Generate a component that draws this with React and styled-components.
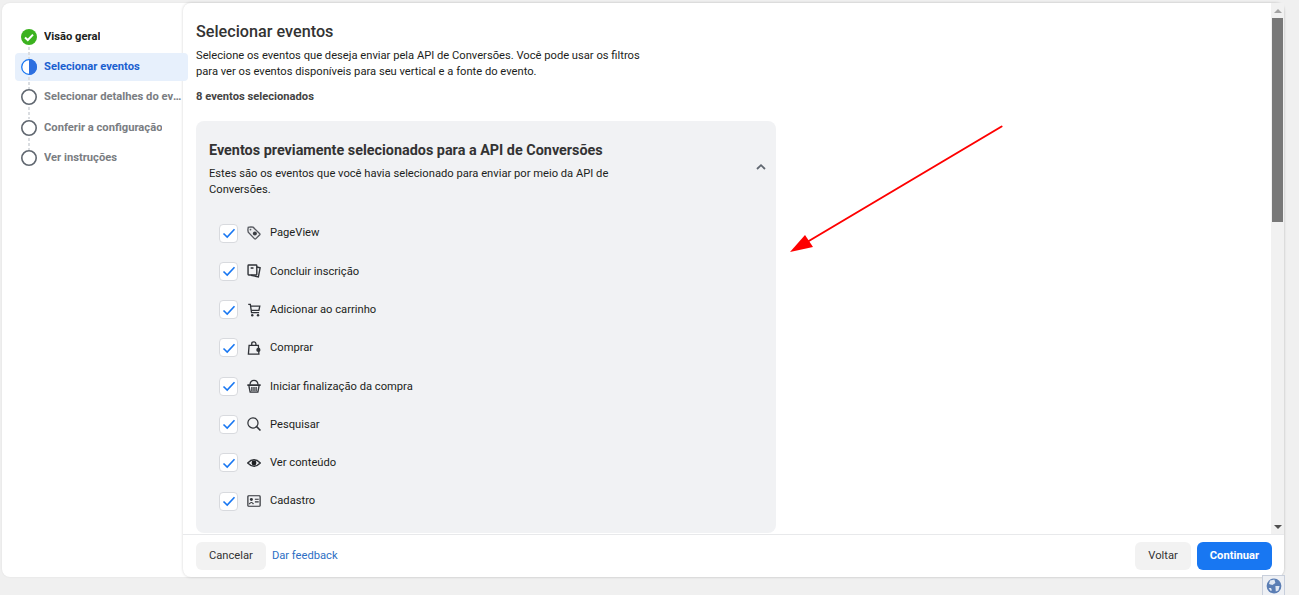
import React from 'react'
import styled, { createGlobalStyle } from 'styled-components'

const Global = createGlobalStyle`
  html, body { margin: 0; padding: 0; height: 100%; background: #f0f0f0; overflow: hidden; }
  body { font-family: Roboto, "Liberation Sans", sans-serif; color: #1c1e21; }
`

const steps = [
  { label: 'Visão geral', state: 'done' },
  { label: 'Selecionar eventos', state: 'current' },
  { label: 'Selecionar detalhes do evento', state: 'todo' },
  { label: 'Conferir a configuração', state: 'todo' },
  { label: 'Ver instruções', state: 'todo' },
]

const TagIcon = () => (
  <svg width="14" height="14" viewBox="0 0 16 16" fill="none" stroke="#55585e" strokeWidth="1.5">
    <path d="M1 4.5 L1.4 1.4 L4.5 1 L7 1.4 L14.6 8.8 Q15.1 9.4 14.6 10 L9.9 14.7 Q9.3 15.2 8.7 14.7 L1.4 7 Z" fill="#e9eaec" />
    <circle cx="9" cy="8.6" r="2.3" fill="#3a3d42" stroke="none" />
    <circle cx="4" cy="4" r="1" fill="#55585e" stroke="none" />
  </svg>
)

const PagesIcon = () => (
  <svg width="14" height="14" viewBox="0 0 16 16" fill="none" stroke="#303338" strokeWidth="1.6">
    <rect x="1.2" y="1.2" width="10" height="11.4" rx="0.8" />
    <path d="M11.2 3.4 L15 4.4 L13 14.8 L4.6 12.8" />
    <path d="M4.2 4.6 H7.4" strokeWidth="1.8" />
  </svg>
)

const CartIcon = () => (
  <svg width="14" height="14" viewBox="0 0 16 16" fill="none" stroke="#303338" strokeWidth="1.5">
    <path d="M1.4 1.6 H3.8 L5.2 11 H13.8" />
    <path d="M4 3.6 H14.6 L13.6 8.4 H4.8" />
    <circle cx="6" cy="14" r="1.4" fill="#303338" stroke="none" />
    <circle cx="12.6" cy="14" r="1.4" fill="#303338" stroke="none" />
  </svg>
)

const BagIcon = () => (
  <svg width="14" height="14" viewBox="0 0 16 16" fill="none" stroke="#303338" strokeWidth="1.5">
    <path d="M2.4 5 H13 L13.6 15 H1.6 Z" />
    <path d="M5.4 5 V3 Q5.4 1 7.8 1 Q10.2 1 10.2 3 V5" />
    <circle cx="13" cy="10.2" r="2.4" fill="#303338" stroke="none" />
  </svg>
)

const BasketIcon = () => (
  <svg width="14" height="14" viewBox="0 0 16 16" fill="none" stroke="#303338" strokeWidth="1.5">
    <path d="M3.4 6.6 Q3.8 1.6 8 1.6 Q12.2 1.6 12.6 6.6" />
    <path d="M0.4 7 H15.6" strokeWidth="2" />
    <path d="M2.2 8 L3.6 15 H12.4 L13.8 8" />
    <path d="M5.6 9 V14 M8 9 V14 M10.4 9 V14" />
  </svg>
)

const SearchIcon = () => (
  <svg width="14" height="14" viewBox="0 0 16 16" fill="none" stroke="#303338" strokeWidth="1.4">
    <circle cx="6.8" cy="6.8" r="5.8" />
    <path d="M11 11 L15.4 15.4" strokeWidth="1.8" />
  </svg>
)

const EyeIcon = () => (
  <svg width="14" height="14" viewBox="0 0 16 16" fill="none" stroke="#303338" strokeWidth="1.6">
    <path d="M0.8 8 Q8 0.6 15.2 8 Q8 15.4 0.8 8 Z" />
    <circle cx="8" cy="8" r="2.8" fill="#1c1e21" stroke="none" />
  </svg>
)

const CardIcon = () => (
  <svg width="14" height="14" viewBox="0 0 16 16" fill="none" stroke="#303338" strokeWidth="1.4">
    <rect x="1" y="2" width="14" height="12" rx="1" />
    <circle cx="5" cy="6.4" r="1.7" fill="#303338" stroke="none" />
    <path d="M2.6 11.6 Q5 7.8 7.4 11.6" />
    <path d="M9 6 H13.4 M9 9 H13.4" />
  </svg>
)

const events = [
  { label: 'PageView', icon: <TagIcon /> },
  { label: 'Concluir inscrição', icon: <PagesIcon /> },
  { label: 'Adicionar ao carrinho', icon: <CartIcon /> },
  { label: 'Comprar', icon: <BagIcon /> },
  { label: 'Iniciar finalização da compra', icon: <BasketIcon /> },
  { label: 'Pesquisar', icon: <SearchIcon /> },
  { label: 'Ver conteúdo', icon: <EyeIcon /> },
  { label: 'Cadastro', icon: <CardIcon /> },
]

const StepMark = ({ state }) => {
  if (state === 'done') {
    return (
      <svg width="18" height="18" viewBox="0 0 18 18">
        <circle cx="9" cy="9" r="8" fill="#3bb21f" />
        <path d="M5 9.4 L7.8 12 L13 6.6" fill="none" stroke="#fff" strokeWidth="2" />
      </svg>
    )
  }
  if (state === 'current') {
    return (
      <svg width="18" height="18" viewBox="0 0 18 18">
        <circle cx="9" cy="9" r="7.3" fill="#fff" stroke="#1877f2" strokeWidth="1.3" />
        <path d="M9 1 A8 8 0 0 1 9 17 Z" fill="#2d6fe0" />
      </svg>
    )
  }
  return (
    <svg width="18" height="18" viewBox="0 0 18 18">
      <circle cx="9" cy="9" r="7.2" fill="#fff" stroke="#606770" strokeWidth="1.6" />
    </svg>
  )
}

const App = () => (
  <Page>
    <Global />
    <Shell>
      <Sidebar>
        {steps.map((s, i) => (
          <Step key={s.label} $current={s.state === 'current'}>
            <MarkSlot $last={i === steps.length - 1}>
              <StepMark state={s.state} />
            </MarkSlot>
            <StepLabel $state={s.state}>{s.label}</StepLabel>
          </Step>
        ))}
      </Sidebar>
      <Main>
        <ScrollArea>
          <Content>
            <Title>Selecionar eventos</Title>
            <Intro>
              Selecione os eventos que deseja enviar pela API de Conversões. Você pode usar os filtros
              para ver os eventos disponíveis para seu vertical e a fonte do evento.
            </Intro>
            <Count>8 eventos selecionados</Count>
            <Card>
              <CardHead>
                <div>
                  <CardTitle>Eventos previamente selecionados para a API de Conversões</CardTitle>
                  <CardText>
                    Estes são os eventos que você havia selecionado para enviar por meio da API de Conversões.
                  </CardText>
                </div>
                <Chevron width="12" height="12" viewBox="0 0 12 12">
                  <path d="M2 8 L6 4.2 L10 8" fill="none" stroke="#606770" strokeWidth="1.8" />
                </Chevron>
              </CardHead>
              <EventList>
                {events.map((e) => (
                  <EventRow key={e.label}>
                    <Check>
                      <svg width="14" height="14" viewBox="0 0 14 14">
                        <path d="M1.5 7.5 L5.2 11 L12.5 3.2" fill="none" stroke="#1877f2" strokeWidth="1.6" />
                      </svg>
                    </Check>
                    <EventIcon>{e.icon}</EventIcon>
                    <EventLabel>{e.label}</EventLabel>
                  </EventRow>
                ))}
              </EventList>
            </Card>
          </Content>
          <Scrollbar>
            <ScrollArrow $dir="up" />
            <Thumb />
            <ScrollArrow $dir="down" />
          </Scrollbar>
        </ScrollArea>
        <Footer>
          <FooterGroup>
            <Button>Cancelar</Button>
            <FeedbackLink>Dar feedback</FeedbackLink>
          </FooterGroup>
          <FooterGroup>
            <Button>Voltar</Button>
            <Button $primary>Continuar</Button>
          </FooterGroup>
        </Footer>
      </Main>
    </Shell>
    <Arrow width="240" height="150" viewBox="0 0 240 150">
      <path d="M217.6 1.5 L24 116.5" stroke="#fe0000" strokeWidth="2" strokeLinecap="round" fill="none" />
      <path d="M6 127 L21 110 L29 122 Z" fill="#fe0000" />
    </Arrow>
    <GlobeTab>
      <svg width="16" height="16" viewBox="0 0 16 16">
        <circle cx="8" cy="8" r="7.4" fill="#5a7db4" />
        <path d="M4 2.4 L8.4 1.6 L9.4 5 L6.4 7 L3 6 Z M9.4 8 L13.6 8 L12.4 12.4 L9.8 13.6 Z M2.6 10 L5 10 L6 12.4 L4.4 12.8 Z" fill="#dfe6f2" />
      </svg>
    </GlobeTab>
  </Page>
)

export default App

const Page = styled.div`
  position: relative;
  height: 595px;
  box-sizing: border-box;
  padding: 3px 15px 18px 2px;
  overflow: hidden;
`

const Shell = styled.div`
  display: flex;
  height: 100%;
  background: #fff;
  border-radius: 8px;
  box-shadow: 0 0 2px rgba(0, 0, 0, 0.08);
`

const Sidebar = styled.nav`
  position: relative;
  z-index: 1;
  flex: 0 0 181px;
  width: 181px;
  box-sizing: border-box;
  padding: 19.85px 0 0 13px;
  display: flex;
  flex-direction: column;
  gap: 2.3px;
`

const Step = styled.div`
  display: flex;
  align-items: center;
  width: 173px;
  height: 28px;
  flex: none;
  box-sizing: border-box;
  padding: 0 4px 0 5px;
  border-radius: 4px;
  background: ${(p) => (p.$current ? '#e7f0fc' : 'transparent')};
`

const MarkSlot = styled.span`
  position: relative;
  flex: none;
  width: 18px;
  height: 18px;
  margin-right: 6px;
  svg { display: block; }
  &::after {
    content: ${(p) => (p.$last ? 'none' : '""')};
    position: absolute;
    left: 8px;
    top: 19px;
    width: 2px;
    height: 12px;
    background: repeating-linear-gradient(#dadde1 0 3px, transparent 3px 5px);
  }
`

const stepColors = { done: '#1c1e21', current: '#1a5fd0', todo: '#7a7d82' }

const StepLabel = styled.span`
  font-size: 11.2px;
  font-weight: 700;
  line-height: 16px;
  color: ${(p) => stepColors[p.$state]};
  white-space: nowrap;
  overflow: hidden;
  text-overflow: ellipsis;
`

const Main = styled.main`
  flex: 1;
  min-width: 0;
  display: flex;
  flex-direction: column;
  border-radius: 8px;
  box-shadow: 0 0 3px rgba(0, 0, 0, 0.18);
  background: #fff;
`

const ScrollArea = styled.div`
  flex: 1;
  min-height: 0;
  display: flex;
  overflow: hidden;
`

const Content = styled.div`
  flex: 1;
  min-width: 0;
  padding: 19px 0 0 13px;
  overflow: hidden;
`

const Title = styled.h1`
  margin: 0;
  font-size: 16.2px;
  font-weight: 500;
  line-height: 20px;
  color: #333;
`

const Intro = styled.p`
  margin: 6px 0 0;
  width: 460px;
  font-size: 11.18px;
  line-height: 16px;
  color: #1c1e21;
`

const Count = styled.div`
  margin-top: 9px;
  font-size: 11.18px;
  font-weight: 700;
  line-height: 16px;
  color: #444;
`

const Card = styled.section`
  margin-top: 16px;
  width: 580px;
  height: 412px;
  box-sizing: border-box;
  padding: 21px 13px 0;
  background: #f1f2f4;
  border-radius: 8px;
`

const CardHead = styled.header`
  display: flex;
  justify-content: space-between;
  align-items: center;
`

const CardTitle = styled.h2`
  margin: 0;
  font-size: 14.38px;
  font-weight: 700;
  line-height: 18px;
  color: #333;
`

const CardText = styled.p`
  margin: 6px 0 0;
  width: 425px;
  font-size: 11.18px;
  line-height: 16px;
  color: #1c1e21;
`

const Chevron = styled.svg`
  flex: none;
  margin: -6px -4px 0 0;
`

const EventList = styled.div`
  margin-top: 25px;
  display: flex;
  flex-direction: column;
  gap: 18.3px;
  padding-left: 10px;
`

const EventRow = styled.label`
  display: flex;
  align-items: center;
  height: 20px;
`

const Check = styled.span`
  flex: none;
  width: 19px;
  height: 19px;
  box-sizing: border-box;
  display: flex;
  align-items: center;
  justify-content: center;
  background: #fff;
  border: 1px solid #d8dade;
  border-radius: 4px;
`

const EventIcon = styled.span`
  flex: none;
  width: 14px;
  height: 14px;
  margin: 0 9px;
  svg { display: block; }
`

const EventLabel = styled.span`
  font-size: 11.18px;
  line-height: 16px;
  position: relative;
  top: 0.4px;
  color: #1c1e21;
`

const Scrollbar = styled.div`
  flex: 0 0 13px;
  display: flex;
  flex-direction: column;
  background: #f1f1f1;
`

const ScrollArrow = styled.div`
  flex: none;
  height: 15px;
  display: flex;
  align-items: center;
  justify-content: center;
  margin-top: ${(p) => (p.$dir === 'down' ? 'auto' : '0')};
  &::before {
    content: '';
    border-left: 4px solid transparent;
    border-right: 4px solid transparent;
    ${(p) => (p.$dir === 'up'
      ? 'border-bottom: 4px solid #a3a3a3;'
      : 'border-top: 4px solid #505050;')}
  }
`

const Thumb = styled.div`
  flex: none;
  height: 204px;
  margin: 0 1px;
  background: #787878;
`

const Footer = styled.footer`
  flex: 0 0 43px;
  box-sizing: border-box;
  display: flex;
  justify-content: space-between;
  align-items: center;
  padding: 0 12px 0 13px;
  border-top: 1px solid #e8e9eb;
`

const FooterGroup = styled.div`
  display: flex;
  align-items: center;
  gap: 6px;
`

const Button = styled.button`
  height: 28px;
  padding: 0 13px 1px;
  border: none;
  border-radius: 6px;
  font-family: inherit;
  font-size: 11.18px;
  font-weight: ${(p) => (p.$primary ? 700 : 400)};
  color: ${(p) => (p.$primary ? '#fff' : '#333')};
  background: ${(p) => (p.$primary ? '#1877f2' : '#f2f2f2')};
`

const FeedbackLink = styled.a`
  position: relative;
  top: -1px;
  font-size: 11.18px;
  color: #2d6fc4;
`

const Arrow = styled.svg`
  position: absolute;
  left: 784px;
  top: 125px;
`

const GlobeTab = styled.div`
  position: absolute;
  right: 14px;
  bottom: 0;
  width: 23px;
  height: 20px;
  box-sizing: border-box;
  display: flex;
  align-items: center;
  justify-content: center;
  background: #eef0f4;
  border: 1px solid #c8cfdc;
  border-bottom: none;
`
